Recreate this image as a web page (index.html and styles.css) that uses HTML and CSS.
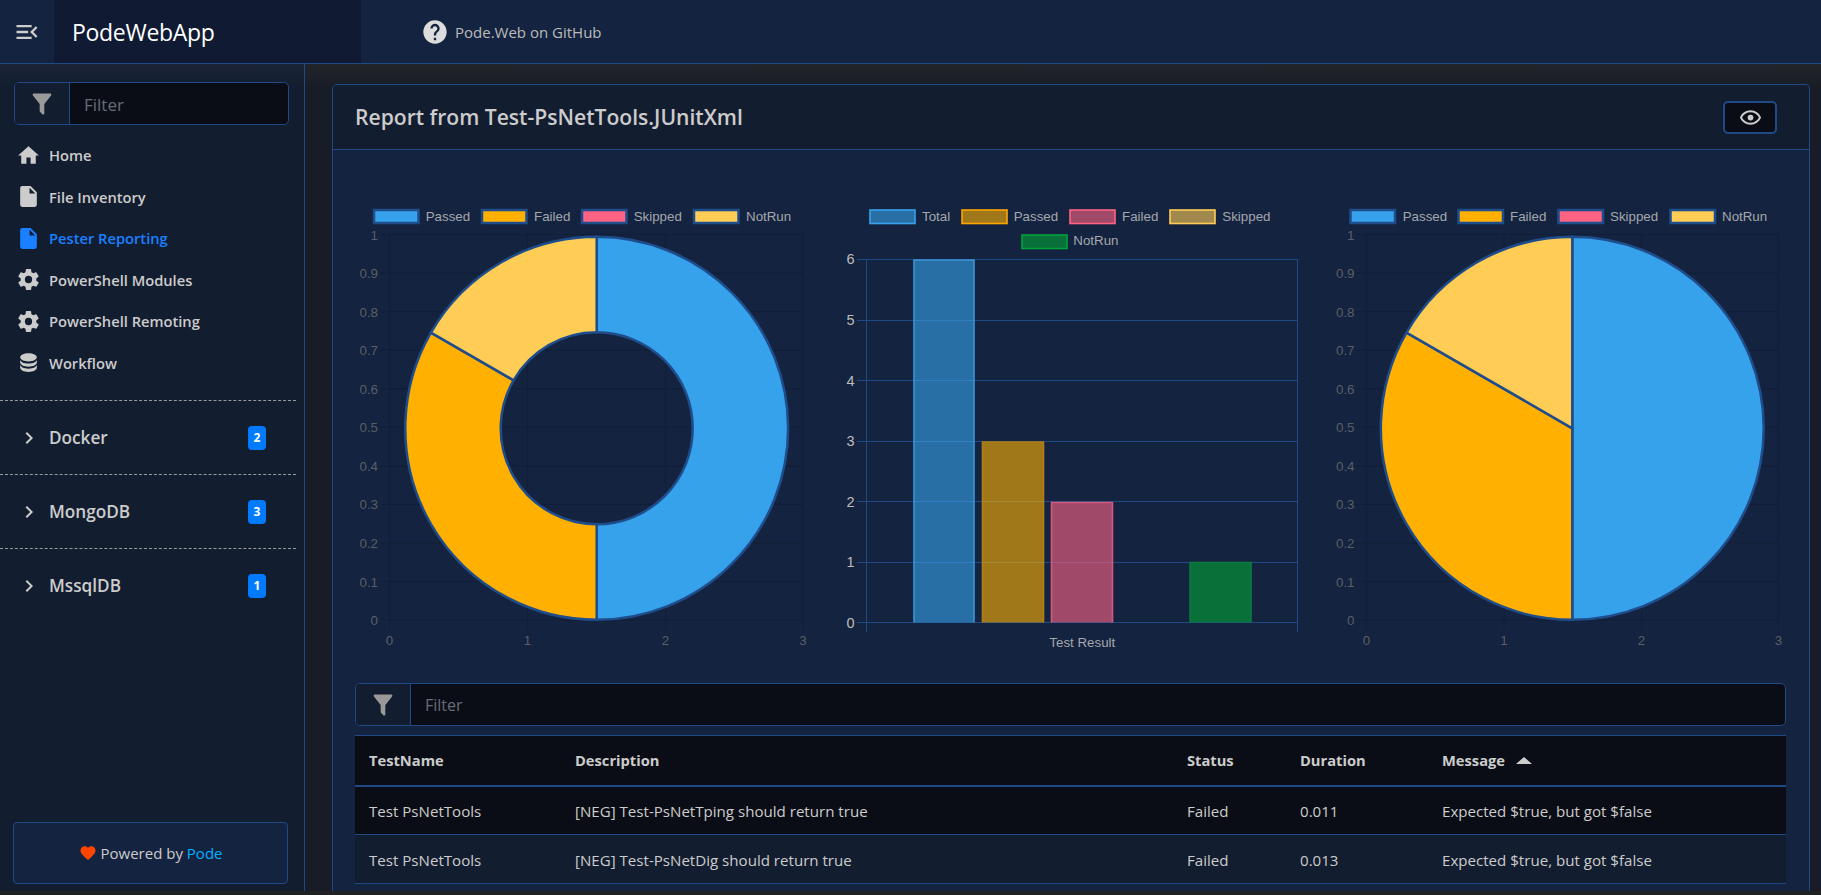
FILE: index.html
```html
<!DOCTYPE html>
<html lang="en">
<head>
<meta charset="utf-8">
<title>PodeWebApp</title>
<link rel="stylesheet" href="styles.css">
</head>
<body>
<header class="topbar">
  <button class="toggle"><svg class="i-toggle" viewBox="0 0 24 24"><path d="M21,15.61L19.59,17L14.58,12L19.59,7L21,8.39L17.44,12L21,15.61M3,6H16V8H3V6M3,13V11H13V13H3M3,18V16H16V18H3Z"/></svg></button>
  <div class="brand">PodeWebApp</div>
  <a class="toplink"><svg class="i-help" viewBox="0 0 24 24"><path d="M15.07,11.25L14.17,12.17C13.45,12.89 13,13.5 13,15H11V14.5C11,13.39 11.45,12.39 12.17,11.67L13.41,10.41C13.78,10.05 14,9.55 14,9C14,7.89 13.1,7 12,7A2,2 0 0,0 10,9H8A4,4 0 0,1 12,5A4,4 0 0,1 16,9C16,9.88 15.64,10.67 15.07,11.25M13,19H11V17H13M12,2A10,10 0 0,0 2,12A10,10 0 0,0 12,22A10,10 0 0,0 22,12C22,6.47 17.5,2 12,2Z"/></svg><span>Pode.Web on GitHub</span></a>
</header>
<div class="shell">
  <aside class="sidebar">
    <div class="filter side-filter">
      <span class="filter-icon side-fi"><svg class="i-funnel" viewBox="0 0 24 24"><path d="M14,12V19.88C14.04,20.18 13.94,20.5 13.71,20.71C13.32,21.1 12.69,21.1 12.3,20.71L10.29,18.7C10.06,18.47 9.96,18.16 10,17.87V12H9.97L4.21,4.62C3.87,4.19 3.95,3.56 4.38,3.22C4.57,3.08 4.78,3 5,3V3H19V3C19.22,3 19.43,3.08 19.62,3.22C20.05,3.56 20.13,4.19 19.79,4.62L14.03,12H14Z"/></svg></span>
      <span class="filter-text side-ft">Filter</span>
    </div>
    <nav class="nav">
      <a class="nav-item"><svg class="nav-icon" viewBox="0 0 24 24"><path d="M10,20V14H14V20H19V12H22L12,3L2,12H5V20H10Z"/></svg>Home</a>
      <a class="nav-item"><svg class="nav-icon" viewBox="0 0 24 24"><path d="M13,9V3.5L18.5,9M6,2C4.89,2 4,2.89 4,4V20A2,2 0 0,0 6,22H18A2,2 0 0,0 20,20V8L14,2H6Z"/></svg>File Inventory</a>
      <a class="nav-item active"><svg class="nav-icon" viewBox="0 0 24 24"><path d="M13,9V3.5L18.5,9M6,2C4.89,2 4,2.89 4,4V20A2,2 0 0,0 6,22H18A2,2 0 0,0 20,20V8L14,2H6Z"/></svg>Pester Reporting</a>
      <a class="nav-item"><svg class="nav-icon" viewBox="0 0 24 24"><path d="M12,15.5A3.5,3.5 0 0,1 8.5,12A3.5,3.5 0 0,1 12,8.5A3.5,3.5 0 0,1 15.5,12A3.5,3.5 0 0,1 12,15.5M19.43,12.97C19.47,12.65 19.5,12.33 19.5,12C19.5,11.67 19.47,11.34 19.43,11L21.54,9.37C21.73,9.22 21.78,8.95 21.66,8.73L19.66,5.27C19.54,5.05 19.27,4.96 19.05,5.05L16.56,6.05C16.04,5.66 15.5,5.32 14.87,5.07L14.5,2.42C14.46,2.18 14.25,2 14,2H10C9.75,2 9.54,2.18 9.5,2.42L9.13,5.07C8.5,5.32 7.96,5.66 7.44,6.05L4.95,5.05C4.73,4.96 4.46,5.05 4.34,5.27L2.34,8.73C2.21,8.95 2.27,9.22 2.46,9.37L4.57,11C4.53,11.34 4.5,11.67 4.5,12C4.5,12.33 4.53,12.65 4.57,12.97L2.46,14.63C2.27,14.78 2.21,15.05 2.34,15.27L4.34,18.73C4.46,18.95 4.73,19.03 4.95,18.95L7.44,17.94C7.96,18.34 8.5,18.68 9.13,18.93L9.5,21.58C9.54,21.82 9.75,22 10,22H14C14.25,22 14.46,21.82 14.5,21.58L14.87,18.93C15.5,18.67 16.04,18.34 16.56,17.94L19.05,18.95C19.27,19.03 19.54,18.95 19.66,18.73L21.66,15.27C21.78,15.05 21.73,14.78 21.54,14.63L19.43,12.97Z"/></svg>PowerShell Modules</a>
      <a class="nav-item"><svg class="nav-icon" viewBox="0 0 24 24"><path d="M12,15.5A3.5,3.5 0 0,1 8.5,12A3.5,3.5 0 0,1 12,8.5A3.5,3.5 0 0,1 15.5,12A3.5,3.5 0 0,1 12,15.5M19.43,12.97C19.47,12.65 19.5,12.33 19.5,12C19.5,11.67 19.47,11.34 19.43,11L21.54,9.37C21.73,9.22 21.78,8.95 21.66,8.73L19.66,5.27C19.54,5.05 19.27,4.96 19.05,5.05L16.56,6.05C16.04,5.66 15.5,5.32 14.87,5.07L14.5,2.42C14.46,2.18 14.25,2 14,2H10C9.75,2 9.54,2.18 9.5,2.42L9.13,5.07C8.5,5.32 7.96,5.66 7.44,6.05L4.95,5.05C4.73,4.96 4.46,5.05 4.34,5.27L2.34,8.73C2.21,8.95 2.27,9.22 2.46,9.37L4.57,11C4.53,11.34 4.5,11.67 4.5,12C4.5,12.33 4.53,12.65 4.57,12.97L2.46,14.63C2.27,14.78 2.21,15.05 2.34,15.27L4.34,18.73C4.46,18.95 4.73,19.03 4.95,18.95L7.44,17.94C7.96,18.34 8.5,18.68 9.13,18.93L9.5,21.58C9.54,21.82 9.75,22 10,22H14C14.25,22 14.46,21.82 14.5,21.58L14.87,18.93C15.5,18.67 16.04,18.34 16.56,17.94L19.05,18.95C19.27,19.03 19.54,18.95 19.66,18.73L21.66,15.27C21.78,15.05 21.73,14.78 21.54,14.63L19.43,12.97Z"/></svg>PowerShell Remoting</a>
      <a class="nav-item"><svg class="nav-icon" viewBox="0 0 24 24"><path d="M12,3C7.58,3 4,4.79 4,7C4,9.21 7.58,11 12,11C16.42,11 20,9.21 20,7C20,4.79 16.42,3 12,3M4,9V12C4,14.21 7.58,16 12,16C16.42,16 20,14.21 20,12V9C20,11.21 16.42,13 12,13C7.58,13 4,11.21 4,9M4,14V17C4,19.21 7.58,21 12,21C16.42,21 20,19.21 20,17V14C20,16.21 16.42,18 12,18C7.58,18 4,16.21 4,14Z"/></svg>Workflow</a>
    </nav>
    <div class="groups">
      <a class="group"><svg class="chev" viewBox="0 0 24 24"><path d="M8.59,16.58L13.17,12L8.59,7.41L10,6L16,12L10,18L8.59,16.58Z"/></svg><span class="group-name">Docker</span><span class="badge">2</span></a>
      <a class="group"><svg class="chev" viewBox="0 0 24 24"><path d="M8.59,16.58L13.17,12L8.59,7.41L10,6L16,12L10,18L8.59,16.58Z"/></svg><span class="group-name">MongoDB</span><span class="badge">3</span></a>
      <a class="group"><svg class="chev" viewBox="0 0 24 24"><path d="M8.59,16.58L13.17,12L8.59,7.41L10,6L16,12L10,18L8.59,16.58Z"/></svg><span class="group-name">MssqlDB</span><span class="badge">1</span></a>
    </div>
    <div class="powered"><svg class="i-heart" viewBox="0 0 24 24"><path d="M12,21.35L10.55,20.03C5.4,15.36 2,12.27 2,8.5C2,5.41 4.41,3 7.5,3C9.24,3 10.91,3.81 12,5.08C13.09,3.81 14.76,3 16.5,3C19.59,3 22,5.41 22,8.5C22,12.27 18.6,15.36 13.45,20.03L12,21.35Z"/></svg><span>Powered by <a class="pode">Pode</a></span></div>
  </aside>
  <main class="main">
    <section class="card">
      <div class="card-head">
        <h1 class="card-title">Report from Test-PsNetTools.JUnitXml</h1>
        <button class="eye"><svg class="i-eye" viewBox="0 0 24 24"><path d="M12,9A3,3 0 0,1 15,12A3,3 0 0,1 12,15A3,3 0 0,1 9,12A3,3 0 0,1 12,9M12,4.5C17,4.5 21.27,7.61 23,12C21.27,16.39 17,19.5 12,19.5C7,19.5 2.73,16.39 1,12C2.73,7.61 7,4.5 12,4.5M3.18,12C4.83,15.36 8.24,17.5 12,17.5C15.76,17.5 19.17,15.36 20.82,12C19.17,8.64 15.76,6.5 12,6.5C8.24,6.5 4.83,8.64 3.18,12Z"/></svg></button>
      </div>
      <div class="card-body">
        <div class="charts">
          <svg class="chart" viewBox="340 170 487 490">
            <g class="grid-faint">
              <path d="M380 234.5H803M380 273.1H803M380 311.6H803M380 350.2H803M380 388.7H803M380 427.3H803M380 465.9H803M380 504.4H803M380 543H803M380 581.5H803M380 620H803"/>
              <path d="M389.5 234V629M527.5 234V629M665.5 234V629M803 234V629"/>
            </g>
            <g class="tick-dim ta-end">
              <text x="378" y="239.5">1</text><text x="378" y="278">0.9</text><text x="378" y="316.6">0.8</text><text x="378" y="355.2">0.7</text><text x="378" y="393.7">0.6</text><text x="378" y="432.3">0.5</text><text x="378" y="470.9">0.4</text><text x="378" y="509.4">0.3</text><text x="378" y="548">0.2</text><text x="378" y="586.5">0.1</text><text x="378" y="625">0</text>
            </g>
            <g class="tick-dim ta-mid">
              <text x="389.5" y="645">0</text><text x="527.5" y="645">1</text><text x="665.5" y="645">2</text><text x="803" y="645">3</text>
            </g>
            <g class="slices">
              <path class="s-blue" d="M596.7 236.8A191.5 191.5 0 0 1 596.7 619.8L596.7 524.3A96 96 0 0 0 596.7 332.3Z"/>
              <path class="s-orange" d="M596.7 619.8A191.5 191.5 0 0 1 430.9 332.55L513.6 380.3A96 96 0 0 0 596.7 524.3Z"/>
              <path class="s-yellow" d="M430.9 332.55A191.5 191.5 0 0 1 596.7 236.8L596.7 332.3A96 96 0 0 0 513.6 380.3Z"/>
            </g>
            <g class="legend-box">
              <rect class="s-blue" x="374" y="210" width="44.5" height="13"/><rect class="s-orange" x="482" y="210" width="44.5" height="13"/><rect class="s-pink" x="582" y="210" width="44.5" height="13"/><rect class="s-yellow" x="694" y="210" width="44.5" height="13"/>
            </g>
            <g class="legend-text">
              <text x="425.7" y="221">Passed</text><text x="534" y="221">Failed</text><text x="633.7" y="221">Skipped</text><text x="746" y="221">NotRun</text>
            </g>
          </svg>
          <svg class="chart" viewBox="827 170 487 490">
            <path class="grid-strong" d="M857 259.5H1297M857 320.5H1297M857 380.5H1297M857 441.5H1297M857 501.5H1297M857 562.5H1297M857 622.5H1297M866.5 259V632M1297.5 259V632"/>
            <g class="tick-bright ta-end">
              <text x="854.5" y="263.5">6</text><text x="854.5" y="324.5">5</text><text x="854.5" y="385.5">4</text><text x="854.5" y="446">3</text><text x="854.5" y="506.5">2</text><text x="854.5" y="566.5">1</text><text x="854.5" y="627.5">0</text>
            </g>
            <path class="bar b-blue" d="M914 622.5V260H974V622.5"/>
            <path class="bar b-orange" d="M982.5 622.5V442H1043.5V622.5"/>
            <path class="bar b-pink" d="M1051.5 622.5V502.5H1112.5V622.5"/>
            <path class="bar b-green" d="M1190 622.5V562.5H1251V622.5"/>
            <g class="legend-box2">
              <rect class="b-blue" x="870" y="210" width="45" height="13.5"/><rect class="b-orange" x="962" y="210" width="45" height="13.5"/><rect class="b-pink" x="1070" y="210" width="45" height="13.5"/><rect class="b-tan" x="1170" y="210" width="45" height="13.5"/><rect class="b-green" x="1022" y="235" width="45" height="13.5"/>
            </g>
            <g class="legend-text">
              <text x="922" y="221">Total</text><text x="1013.7" y="221">Passed</text><text x="1122" y="221">Failed</text><text x="1222.3" y="221">Skipped</text><text x="1073.3" y="245">NotRun</text>
              <text class="ta-mid" x="1082.3" y="647">Test Result</text>
            </g>
          </svg>
          <svg class="chart" viewBox="1314 170 487 490">
            <g class="grid-faint">
              <path d="M1356 234.5H1779M1356 273.1H1779M1356 311.6H1779M1356 350.2H1779M1356 388.7H1779M1356 427.3H1779M1356 465.9H1779M1356 504.4H1779M1356 543H1779M1356 581.5H1779M1356 620H1779"/>
              <path d="M1366.5 234V629M1504 234V629M1641.5 234V629M1778.5 234V629"/>
            </g>
            <g class="tick-dim ta-end">
              <text x="1354.5" y="239.5">1</text><text x="1354.5" y="278">0.9</text><text x="1354.5" y="316.6">0.8</text><text x="1354.5" y="355.2">0.7</text><text x="1354.5" y="393.7">0.6</text><text x="1354.5" y="432.3">0.5</text><text x="1354.5" y="470.9">0.4</text><text x="1354.5" y="509.4">0.3</text><text x="1354.5" y="548">0.2</text><text x="1354.5" y="586.5">0.1</text><text x="1354.5" y="625">0</text>
            </g>
            <g class="tick-dim ta-mid">
              <text x="1366.5" y="645">0</text><text x="1504" y="645">1</text><text x="1641.5" y="645">2</text><text x="1778.5" y="645">3</text>
            </g>
            <g class="slices">
              <path class="s-blue" d="M1572.3 428.3L1572.3 236.8A191.5 191.5 0 0 1 1572.3 619.8Z"/>
              <path class="s-orange" d="M1572.3 428.3L1572.3 619.8A191.5 191.5 0 0 1 1406.5 332.55Z"/>
              <path class="s-yellow" d="M1572.3 428.3L1406.5 332.55A191.5 191.5 0 0 1 1572.3 236.8Z"/>
            </g>
            <g class="legend-box">
              <rect class="s-blue" x="1350.5" y="210" width="44.5" height="13"/><rect class="s-orange" x="1458.5" y="210" width="44.5" height="13"/><rect class="s-pink" x="1558.5" y="210" width="44.5" height="13"/><rect class="s-yellow" x="1670.5" y="210" width="44.5" height="13"/>
            </g>
            <g class="legend-text">
              <text x="1402.7" y="221">Passed</text><text x="1510" y="221">Failed</text><text x="1610" y="221">Skipped</text><text x="1722" y="221">NotRun</text>
            </g>
          </svg>
        </div>
        <div class="filter table-filter">
          <span class="filter-icon table-fi"><svg class="i-funnel" viewBox="0 0 24 24"><path d="M14,12V19.88C14.04,20.18 13.94,20.5 13.71,20.71C13.32,21.1 12.69,21.1 12.3,20.71L10.29,18.7C10.06,18.47 9.96,18.16 10,17.87V12H9.97L4.21,4.62C3.87,4.19 3.95,3.56 4.38,3.22C4.57,3.08 4.78,3 5,3V3H19V3C19.22,3 19.43,3.08 19.62,3.22C20.05,3.56 20.13,4.19 19.79,4.62L14.03,12H14Z"/></svg></span>
          <span class="filter-text table-ft">Filter</span>
        </div>
        <table class="results">
          <colgroup><col class="c1"><col class="c2"><col class="c3"><col class="c4"><col class="c5"></colgroup>
          <thead>
            <tr><th>TestName</th><th>Description</th><th>Status</th><th>Duration</th><th>Message<span class="sort-up"></span></th></tr>
          </thead>
          <tbody>
            <tr><td>Test PsNetTools</td><td>[NEG] Test-PsNetTping should return true</td><td>Failed</td><td>0.011</td><td>Expected $true, but got $false</td></tr>
            <tr class="alt"><td>Test PsNetTools</td><td>[NEG] Test-PsNetDig should return true</td><td>Failed</td><td>0.013</td><td>Expected $true, but got $false</td></tr>
          </tbody>
        </table>
      </div>
    </section>
  </main>
</div>
</body>
</html>
```
FILE: styles.css
```css
* { box-sizing: border-box; }
html, body { margin: 0; height: 895px; overflow: hidden; }
body { background: #1f2123; color: #ccc; font-family: "Open Sans", "Noto Sans", sans-serif; font-size: 14px; }
a { color: inherit; text-decoration: none; }
svg { display: block; fill: currentColor; }

.topbar { height: 64px; display: flex; align-items: stretch; background: #14233f; border-bottom: 1px solid #1f4a85; }
.toggle { width: 54px; padding: 0; border: 0; background: none; color: #ccc; display: flex; align-items: center; justify-content: center; }
.i-toggle { width: 28px; height: 28px; margin-left: -1px; }
.brand { width: 307px; background: #101b33; color: #fff; font-size: 23px; padding: 0 0 0 18px; display: flex; align-items: center; letter-spacing: -0.3px; }
.toplink { margin-left: 60px; display: flex; align-items: center; color: #bbb; font-size: 15px; gap: 6px; }
.i-help { width: 28px; height: 28px; color: #ddd; }

.shell { height: 827px; display: flex; }
.sidebar { width: 305px; display: flex; flex-direction: column; padding: 18px 0 8px; background: linear-gradient(#1a2436, #131d30 24px); border-right: 1px solid #1f4a85; }

.filter { display: flex; border: 1px solid #1f4a85; border-radius: 5px; overflow: hidden; background: #0a0d15; }
.side-filter { height: 43px; margin: 0 15px 0 14px; }
.table-filter { height: 43px; margin-top: 23px; }
.filter-icon { display: flex; align-items: center; justify-content: center; color: #999; background: #131d30; border-right: 1px solid #1f4a85; }
.side-fi { width: 55px; }
.table-fi { width: 55px; }
.i-funnel { width: 28px; height: 28px; }
.filter-text { display: flex; align-items: center; color: #666d78; font-size: 16px; }
.side-ft { padding-left: 14px; font-size: 17px; padding-top: 1px; }
.table-ft { padding-left: 14px; font-size: 16px; }

.nav { display: flex; flex-direction: column; margin-top: 9.5px; }
.nav-item { height: 41.5px; display: flex; align-items: center; padding-left: 16px; gap: 8px; font-weight: 600; font-size: 14.7px; color: #ccc; }
.nav-icon { width: 25px; height: 25px; flex: none; }
.active { color: #1a80ff; }

.groups { display: flex; flex-direction: column; margin: 16.5px 8px 0 0; }
.group { height: 74px; display: flex; align-items: center; border-top: 1px dashed #999; padding: 0 30px 0 17px; gap: 8px; font-size: 17.2px; font-weight: 600; color: #ccc; }
.group-name { flex: 1; margin-top: -1px; }
.chev { width: 24px; height: 24px; flex: none; }
.badge { width: 18px; height: 24px; border-radius: 4px; background: #007bff; color: #fff; font-size: 12px; font-weight: 700; display: flex; align-items: center; justify-content: center; }

.powered { margin: auto 16px -1px 13px; height: 62px; display: flex; align-items: center; justify-content: center; gap: 4px; background: #14233f; border: 1px solid #1f4a85; border-radius: 4px; font-size: 15px; color: #ccc; }
.i-heart { width: 18px; height: 18px; color: #ff4500; }
.pode { color: #00b0ff; }

.main { flex: 1; padding: 20px 11px 0 27px; background: linear-gradient(#22242a, #171c26 24px); }
.card { height: 807px; background: #14233f; border: 1px solid #1f4a85; border-bottom: 0; border-radius: 5px 5px 0 0; overflow: hidden; }
.card-head { height: 65px; display: flex; align-items: center; justify-content: space-between; padding: 0 32px 0 22px; background: #131d30; border-bottom: 1px solid #1f4a85; }
.card-title { margin: -2px 0 0; font-size: 21.1px; font-weight: 600; color: #ccc; }
.eye { width: 54px; height: 33px; margin-top: 1px; padding: 0; background: #0a0d15; border: 2px solid #1f4a85; border-radius: 5px; color: #ccc; display: flex; align-items: center; justify-content: center; }
.i-eye { width: 23px; height: 23px; }

.card-body { padding: 20px 23px 0 22px; }
.charts { display: grid; grid-template-columns: repeat(3, 487px); margin: 0 -15px; }
.chart { width: 487px; height: 490px; }

.grid-faint path { fill: none; stroke: #111e37; stroke-width: 1; }
.grid-strong { fill: none; stroke: #1f4a85; stroke-width: 1; }
.tick-dim text { fill: #5a5e66; font: 13.33px "Liberation Sans", Arial, sans-serif; }
.tick-bright text { fill: #bdbdbd; font: 14.5px "Liberation Sans", Arial, sans-serif; }
.legend-text text { fill: #a4a7ad; font: 13.33px "Liberation Sans", Arial, sans-serif; }
.ta-end text { text-anchor: end; }
.ta-mid text, text.ta-mid { text-anchor: middle; }

.slices path, .legend-box rect { stroke: #1f4d8c; stroke-width: 2.5; }
.s-blue { fill: #36a2eb; }
.s-orange { fill: #ffb000; }
.s-pink { fill: #ff6384; }
.s-yellow { fill: #ffcd56; }

.bar { stroke-width: 1.6; }
.legend-box2 rect { stroke-width: 1.6; }
.b-blue { fill: rgba(54,162,235,.6); stroke: #36a2eb; }
.b-orange { fill: rgba(255,176,0,.6); stroke: #ffa500; }
.b-pink { fill: rgba(255,99,132,.6); stroke: #ff6384; }
.b-tan { fill: rgba(255,205,86,.6); stroke: #ffcd56; }
.b-green { fill: rgba(0,163,51,.6); stroke: #00a33a; }
.bar.b-blue { stroke: #3a95d8; }
.bar.b-orange { stroke: #b07f14; }
.bar.b-pink { stroke: #d05a7e; }
.bar.b-green { stroke: #0b7a3e; }

.results { width: 1431px; margin-top: 9px; border-collapse: collapse; table-layout: fixed; background: #0a0d15; font-size: 15.1px; }
.c1 { width: 206px; }
.c2 { width: 612px; }
.c3 { width: 113px; }
.c4 { width: 142px; }
.c5 { width: 358px; }
.results th { height: 50px; padding: 0 0 0 14px; text-align: left; font-weight: 700; font-size: 14.7px; color: #ccc; border-top: 1px solid #1f4a85; border-bottom: 2px solid #1f4a85; }
.results td { height: 49px; padding: 1px 0 0 14px; color: #ccc; border-bottom: 1px solid #1f4a85; }
.results .alt { background: #131d30; }
.sort-up { display: inline-block; margin-left: 11px; vertical-align: 2px; border-left: 8px solid transparent; border-right: 8px solid transparent; border-bottom: 7px solid #ccc; }
```
